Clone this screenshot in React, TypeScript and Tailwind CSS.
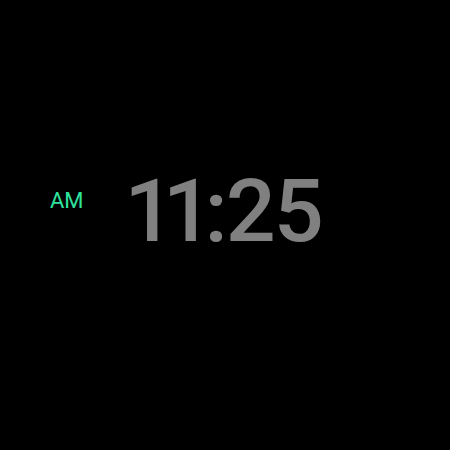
export default function App() {
  return (
    <div className="w-full h-[450px] bg-black flex items-center pl-[50px] pb-[28px] font-['Roboto','Liberation_Sans',Arial,sans-serif]">
      <span className="text-[22px] leading-none text-[#2fe39f] mb-[20px]">AM</span>
      <span className="ml-[44px] text-[88px] leading-none font-medium proportional-nums tracking-[-2px] text-[#808080]">
        11:25
      </span>
    </div>
  );
}
